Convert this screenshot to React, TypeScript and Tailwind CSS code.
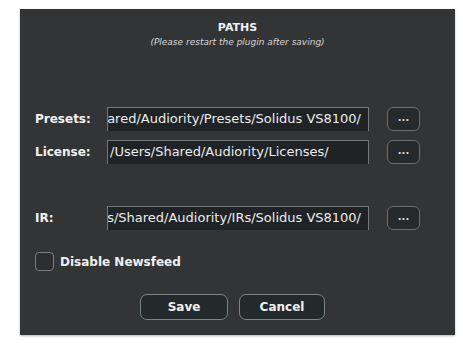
const rows = [
  { label: "Presets:", path: "/Users/Shared/Audiority/Presets/Solidus VS8100/", end: true },
  { label: "License:", path: "/Users/Shared/Audiority/Licenses/", end: false },
];

function PathRow({ label, path, end }: { label: string; path: string; end: boolean }) {
  return (
    <div className="flex h-[24px] items-center">
      <div className="w-[72px] text-[12px] font-bold text-[#f2f2f2]">{label}</div>
      <div
        className={`flex h-[24px] w-[262px] items-center overflow-hidden border-x border-t border-[#74787a] bg-[#1f2325] pb-[1px] text-[13px] text-[#ececec] ${
          end ? "justify-end pr-[7px]" : "justify-start pl-[2px]"
        }`}
      >
        <span className="shrink-0 whitespace-nowrap">{path}</span>
      </div>
      <button className="ml-[18px] flex h-[24px] w-[33px] items-center justify-center rounded-[6px] border border-[#6c6f71] bg-[#262a2c] pb-[2px] text-[10px] font-bold leading-none text-[#d8d8d8]">
        ...
      </button>
    </div>
  );
}

export default function App() {
  return (
    <div className="min-h-screen bg-white pl-[20px] pt-[9px]" style={{ fontFamily: '"DejaVu Sans", sans-serif' }}>
      <div className="flex h-[326px] w-[435px] flex-col bg-[#333435] pl-[15px] shadow-[0_1px_2px_rgba(0,0,0,0.3)]">
        <div className="-ml-[15px] pt-[12px] text-center text-[11px] font-bold leading-[14px] text-[#f0f0f0]">PATHS</div>
        <div className="-ml-[15px] pt-[2px] text-center text-[9px] italic leading-[10px] text-[#d6d6d6]">
          (Please restart the plugin after saving)
        </div>

        <div className="mt-[60px] flex flex-col gap-[9px]">
          {rows.map((r) => (
            <PathRow key={r.label} {...r} />
          ))}
        </div>

        <div className="mt-[42px]">
          <PathRow label="IR:" path="/Users/Shared/Audiority/IRs/Solidus VS8100/" end />
        </div>

        <label className="mt-[22px] flex items-center gap-[6px]">
          <span className="h-[19px] w-[19px] rounded-[4px] border border-[#7a7d7f] bg-[#2c2e30]" />
          <span className="text-[12px] font-bold text-[#f0f0f0]">Disable Newsfeed</span>
        </label>

        <div className="mt-[23px] flex gap-[11px] pl-[105px]">
          <button className="h-[26px] w-[88px] rounded-[7px] border border-[#808385] bg-[#232a2c] text-[12px] font-bold text-[#f0f0f0]">
            Save
          </button>
          <button className="h-[26px] w-[86px] rounded-[7px] border border-[#808385] bg-[#232a2c] text-[12px] font-bold text-[#f0f0f0]">
            Cancel
          </button>
        </div>
      </div>
    </div>
  );
}
